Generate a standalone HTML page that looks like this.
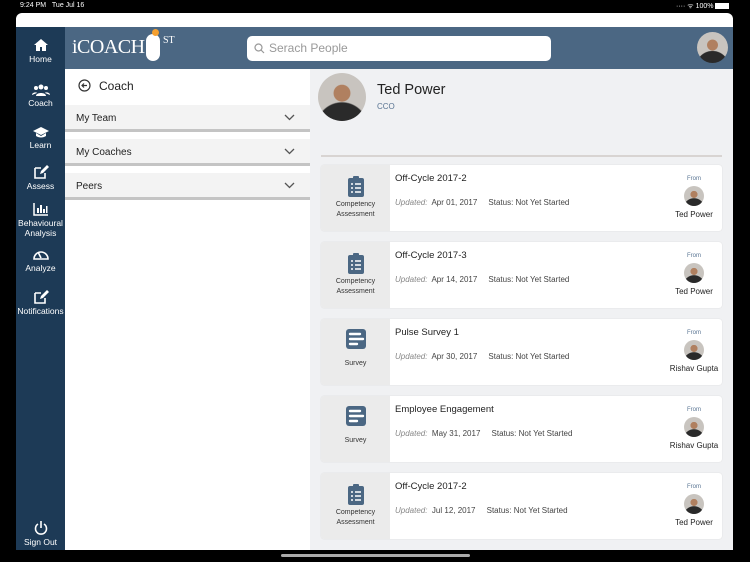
<!DOCTYPE html>
<html><head><meta charset="utf-8"><style>
*{margin:0;padding:0;box-sizing:border-box}
body{width:750px;height:562px;background:#000;position:relative;overflow:hidden;font-family:"Liberation Sans",sans-serif}
.abs{position:absolute}
.status{color:#fff;font-size:7px;top:2px}
.app{left:16px;top:13px;width:717px;height:537px;background:#fff;border-radius:6px 6px 0 0;overflow:hidden}
.side{left:0;top:14px;width:49px;height:523px;background:#1d3a56}
.nav{position:absolute;left:0;width:49px;text-align:center;color:#fff;font-size:8.5px;line-height:10px}
.nav svg{display:block;margin:0 auto 2px}
.hdr{left:49px;top:14px;width:668px;height:42px;background:#4b6783}
.left{left:49px;top:56px;width:245px;height:481px;background:#fff}
.right{left:294px;top:56px;width:423px;height:481px;background:#f0f1f3}
.acc{position:absolute;left:0;width:245px;height:27px;background:#f3f3f3;border-bottom:3px solid #c4c4c4;font-size:10px;color:#222;padding:8px 0 0 11px}
.acc svg{position:absolute;right:15px;top:9px}
.card{position:absolute;left:11px;width:401px;height:66px;background:#fff;border-radius:3px;box-shadow:0 0 1px #ccc}
.cl{position:absolute;left:0;top:0;width:69px;height:66px;background:#ebebeb;border-radius:3px 0 0 3px;text-align:center;font-size:7px;color:#333;line-height:10px}
.t{position:absolute;left:74px;top:8px;font-size:9.5px;color:#222}
.u{position:absolute;left:74px;top:33px;font-size:8px;color:#444;white-space:nowrap}
.u i{color:#888}
.fr{position:absolute;right:3px;top:11px;width:50px;text-align:center;font-size:6px;color:#5a7593}
.fr b{font-weight:normal;display:block;font-size:8px;color:#222;margin-top:4px;white-space:nowrap}
.av{border-radius:50%;background:radial-gradient(circle at 50% 42%,#b08060 0 22%,transparent 24%),radial-gradient(circle at 50% 115%,#2a2a2a 0 42%,transparent 44%),#c8c4bf}
.fr .av{width:20px;height:20px;margin:4px auto 0}
</style></head><body>
<div class="abs status" style="left:20px">9:24 PM&nbsp;&nbsp;&nbsp;Tue Jul 16</div>
<div class="abs status" style="left:676px">···· ᯤ 100% <span style="display:inline-block;width:14px;height:6px;background:#fff;vertical-align:middle"></span></div>
<div class="abs app">
 <div class="abs side">
  <div class="nav" style="top:11px"><svg width="16" height="14" viewBox="0 0 16 14"><path d="M8 1L1 7h2v6h4V9h2v4h4V7h2z" fill="#fff"/></svg>Home</div>
  <div class="nav" style="top:57px"><svg width="18" height="12" viewBox="0 0 18 12"><circle cx="9" cy="3" r="2.5" fill="#fff"/><circle cx="4" cy="4" r="2" fill="#fff"/><circle cx="14" cy="4" r="2" fill="#fff"/><path d="M4 12c0-4 10-4 10 0zM0 11c0-3 5-3 5-2zM18 11c0-3-5-3-5-2z" fill="#fff"/></svg>Coach</div>
  <div class="nav" style="top:99px"><svg width="18" height="12" viewBox="0 0 18 12"><path d="M9 1L1 5l8 4 8-4z M4 7v3c3 2 7 2 10 0V7L9 10z" fill="#fff"/></svg>Learn</div>
  <div class="nav" style="top:138px"><svg width="16" height="14" viewBox="0 0 16 14"><path d="M2 3h6M2 3v10h10V8" stroke="#fff" stroke-width="1.6" fill="none"/><path d="M7 9l1-3 6-6 2 2-6 6z" fill="#fff"/></svg>Assess</div>
  <div class="nav" style="top:175px"><svg width="16" height="14" viewBox="0 0 16 14"><path d="M1 1v12h14" stroke="#fff" stroke-width="1.5" fill="none"/><path d="M4 6h2v5H4zM7 3h2v8H7zM10 7h2v4h-2zM13 4h1.5v7H13z" fill="#fff"/></svg>Behavioural<br>Analysis</div>
  <div class="nav" style="top:220px"><svg width="18" height="14" viewBox="0 0 18 14"><path d="M2 12a7 7 0 1 1 14 0z" stroke="#fff" stroke-width="1.6" fill="none"/><path d="M9 11L6 5" stroke="#fff" stroke-width="1.6"/></svg>Analyze</div>
  <div class="nav" style="top:263px"><svg width="16" height="14" viewBox="0 0 16 14"><path d="M2 3h6M2 3v10h10V8" stroke="#fff" stroke-width="1.6" fill="none"/><path d="M7 9l1-3 6-6 2 2-6 6z" fill="#fff"/></svg>Notifications</div>
  <div class="nav" style="top:494px"><svg width="14" height="14" viewBox="0 0 14 14"><path d="M4 3a5.5 5.5 0 1 0 6 0" stroke="#fff" stroke-width="1.6" fill="none"/><path d="M7 0v7" stroke="#fff" stroke-width="1.6"/></svg>Sign Out</div>
 </div>
 <div class="abs hdr">
  <div class="abs" style="left:7px;top:9px;color:#fff;font-family:'Liberation Serif',serif;font-size:20px;letter-spacing:-0.5px">iCOACH</div>
  <div class="abs" style="left:81px;top:7px;width:14px;height:27px;background:#fff;border-radius:7px"></div>
  <div class="abs" style="left:87px;top:2px;width:7px;height:7px;background:#f5a030;border-radius:50%"></div>
  <div class="abs" style="left:98px;top:8px;color:#fff;font-family:'Liberation Serif',serif;font-size:10px">ST</div>
  <div class="abs" style="left:182px;top:9px;width:304px;height:25px;background:#fff;border-radius:5px;color:#999;font-size:12px;padding:5px 0 0 22px">Serach People
   <svg class="abs" style="left:7px;top:7px" width="11" height="11" viewBox="0 0 11 11"><circle cx="4.5" cy="4.5" r="3.5" stroke="#999" stroke-width="1.2" fill="none"/><path d="M7 7l3 3" stroke="#999" stroke-width="1.2"/></svg></div>
  <div class="abs av" style="left:632px;top:5px;width:31px;height:31px"></div>
 </div>
 <div class="abs left">
  <svg class="abs" style="left:13px;top:10px" width="13" height="13" viewBox="0 0 13 13"><circle cx="6.5" cy="6.5" r="5.5" stroke="#333" stroke-width="1.2" fill="none"/><path d="M9 6.5H4M6 4.5l-2 2 2 2" stroke="#333" stroke-width="1.2" fill="none"/></svg>
  <div class="abs" style="left:34px;top:10px;font-size:12px;color:#222">Coach</div>
  <div class="acc" style="top:36px">My Team<svg width="11" height="7" viewBox="0 0 11 7"><path d="M1 1l4.5 4.5L10 1" stroke="#555" stroke-width="1.3" fill="none"/></svg></div>
  <div class="acc" style="top:70px">My Coaches<svg width="11" height="7" viewBox="0 0 11 7"><path d="M1 1l4.5 4.5L10 1" stroke="#555" stroke-width="1.3" fill="none"/></svg></div>
  <div class="acc" style="top:104px">Peers<svg width="11" height="7" viewBox="0 0 11 7"><path d="M1 1l4.5 4.5L10 1" stroke="#555" stroke-width="1.3" fill="none"/></svg></div>
 </div>
 <div class="abs right">
  <div class="abs av" style="left:8px;top:4px;width:48px;height:48px"></div>
  <div class="abs" style="left:67px;top:13px;font-size:14.5px;color:#222">Ted Power</div>
  <div class="abs" style="left:67px;top:33px;font-size:8px;color:#5a7593">CCO</div>
  <div class="abs" style="left:11px;top:86px;width:401px;height:2px;background:#d8d4d2"></div>

  <div class="card" style="top:96px"><div class="cl"><svg style="margin:10px auto 3px;display:block" width="18" height="22" viewBox="0 0 18 22"><rect x="1" y="3" width="16" height="19" rx="2" fill="#4b6783"/><rect x="6" y="1" width="6" height="4" rx="1" fill="#4b6783"/><path d="M4 9h2M8 9h6M4 13h2M8 13h6M4 17h2M8 17h6" stroke="#fff" stroke-width="1.5"/></svg>Competency<br>Assessment</div><div class="t">Off-Cycle 2017-2</div><div class="u"><i>Updated:</i>&nbsp; Apr 01, 2017 &nbsp;&nbsp;&nbsp; Status: Not Yet Started</div><div class="fr">From<div class="av"></div><b>Ted Power</b></div></div>

  <div class="card" style="top:173px"><div class="cl"><svg style="margin:10px auto 3px;display:block" width="18" height="22" viewBox="0 0 18 22"><rect x="1" y="3" width="16" height="19" rx="2" fill="#4b6783"/><rect x="6" y="1" width="6" height="4" rx="1" fill="#4b6783"/><path d="M4 9h2M8 9h6M4 13h2M8 13h6M4 17h2M8 17h6" stroke="#fff" stroke-width="1.5"/></svg>Competency<br>Assessment</div><div class="t">Off-Cycle 2017-3</div><div class="u"><i>Updated:</i>&nbsp; Apr 14, 2017 &nbsp;&nbsp;&nbsp; Status: Not Yet Started</div><div class="fr">From<div class="av"></div><b>Ted Power</b></div></div>

  <div class="card" style="top:250px"><div class="cl"><svg style="margin:10px auto 10px;display:block" width="20" height="20" viewBox="0 0 20 20"><rect width="20" height="20" rx="3" fill="#4b6783"/><path d="M4 5h10M4 10h13M4 15h7" stroke="#fff" stroke-width="2.4" stroke-linecap="round"/></svg>Survey</div><div class="t">Pulse Survey 1</div><div class="u"><i>Updated:</i>&nbsp; Apr 30, 2017 &nbsp;&nbsp;&nbsp; Status: Not Yet Started</div><div class="fr">From<div class="av"></div><b>Rishav Gupta</b></div></div>

  <div class="card" style="top:327px"><div class="cl"><svg style="margin:10px auto 10px;display:block" width="20" height="20" viewBox="0 0 20 20"><rect width="20" height="20" rx="3" fill="#4b6783"/><path d="M4 5h10M4 10h13M4 15h7" stroke="#fff" stroke-width="2.4" stroke-linecap="round"/></svg>Survey</div><div class="t">Employee Engagement</div><div class="u"><i>Updated:</i>&nbsp; May 31, 2017 &nbsp;&nbsp;&nbsp; Status: Not Yet Started</div><div class="fr">From<div class="av"></div><b>Rishav Gupta</b></div></div>

  <div class="card" style="top:404px"><div class="cl"><svg style="margin:10px auto 3px;display:block" width="18" height="22" viewBox="0 0 18 22"><rect x="1" y="3" width="16" height="19" rx="2" fill="#4b6783"/><rect x="6" y="1" width="6" height="4" rx="1" fill="#4b6783"/><path d="M4 9h2M8 9h6M4 13h2M8 13h6M4 17h2M8 17h6" stroke="#fff" stroke-width="1.5"/></svg>Competency<br>Assessment</div><div class="t">Off-Cycle 2017-2</div><div class="u"><i>Updated:</i>&nbsp; Jul 12, 2017 &nbsp;&nbsp;&nbsp; Status: Not Yet Started</div><div class="fr">From<div class="av"></div><b>Ted Power</b></div></div>
 </div>
</div>
<div class="abs" style="left:281px;top:554px;width:189px;height:3px;background:#aaa;border-radius:2px"></div>
</body></html>
